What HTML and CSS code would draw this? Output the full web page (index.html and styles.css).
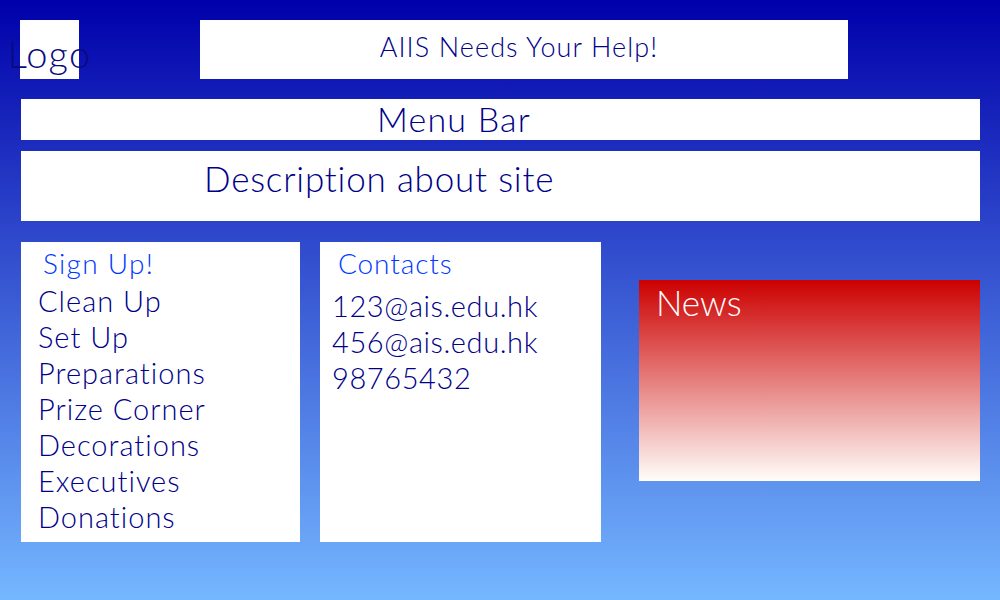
FILE: index.html
```html
<!DOCTYPE html>
<html>
<head>
<meta charset="utf-8">
<link rel="stylesheet" href="styles.css">
</head>
<body>
<div class="page">
  <header class="top">
    <div class="logo"><span>Logo</span></div>
    <div class="title">AIIS Needs Your Help!</div>
  </header>
  <nav class="menu">Menu Bar</nav>
  <section class="desc">Description about site</section>
  <main class="cols">
    <div class="card signup">
      <h2 class="card-head">Sign Up!</h2>
      <ul class="list">
        <li>Clean Up</li>
        <li>Set Up</li>
        <li>Preparations</li>
        <li>Prize Corner</li>
        <li>Decorations</li>
        <li>Executives</li>
        <li>Donations</li>
      </ul>
    </div>
    <div class="card contacts">
      <h2 class="card-head">Contacts</h2>
      <ul class="list">
        <li>123@ais.edu.hk</li>
        <li>456@ais.edu.hk</li>
        <li>98765432</li>
      </ul>
    </div>
    <div class="news">News</div>
  </main>
</div>
</body>
</html>
```

FILE: styles.css
```css
* { box-sizing: border-box; }
html, body { margin: 0; padding: 0; }
body {
  width: 1000px;
  height: 600px;
  overflow: hidden;
  background: linear-gradient(to bottom, #0000aa 0%, #75b7ff 100%);
  font-family: Lato, "Noto Sans", sans-serif;
  font-weight: 300;
  color: #000088;
}
.page {
  padding: 20px 0 0 20px;
  display: flex;
  flex-direction: column;
}
.top {
  display: flex;
  align-items: flex-start;
  gap: 121px;
}
.logo {
  width: 59px;
  height: 59px;
  background: #fff;
  display: flex;
  justify-content: center;
  align-items: center;
}
.logo span {
  font-size: 38px;
  letter-spacing: 1.2px;
  line-height: 1;
  padding-top: 6px;
  color: #0a0a80;
  white-space: nowrap;
}
.title {
  width: 648px;
  height: 59px;
  background: #fff;
  font-size: 27px;
  letter-spacing: 1.1px;
  text-align: center;
  line-height: 54px;
  padding-right: 10px;
}
.menu {
  margin-top: 20px;
  margin-left: 1px;
  width: 959px;
  height: 41px;
  background: #fff;
  font-size: 34px;
  letter-spacing: 1.2px;
  line-height: 40px;
  padding-left: 356px;
}
.desc {
  margin-top: 11px;
  margin-left: 1px;
  width: 959px;
  height: 70px;
  background: #fff;
  font-size: 35px;
  letter-spacing: 0.8px;
  line-height: 54px;
  padding-left: 183px;
}
.cols {
  margin-top: 21px;
  margin-left: 1px;
  display: flex;
  align-items: flex-start;
}
.card {
  height: 300px;
  background: #fff;
}
.signup { width: 279px; padding: 3px 0 0 17px; }
.contacts { width: 281px; margin-left: 20px; padding: 3px 0 0 12px; }
.card-head {
  margin: 0;
  font-weight: 300;
  font-size: 28px;
  letter-spacing: 1.3px;
  line-height: 36px;
  color: #0038ff;
  padding-left: 5px;
}
.contacts .card-head { padding-left: 6px; letter-spacing: 0.9px; }
.list {
  list-style: none;
  margin: 0;
  padding: 0;
  font-size: 29px;
  letter-spacing: 1px;
  line-height: 36px;
}
.signup .list { margin-top: 2px; }
.contacts .list { margin-top: 7px; letter-spacing: 0.6px; }
.news {
  margin-left: 38px;
  margin-top: 38px;
  width: 341px;
  height: 201px;
  background: linear-gradient(to bottom, #cc0000 0%, #fffdfa 100%);
  color: #fff;
  font-size: 35px;
  line-height: 44px;
  padding-left: 17px;
}
```
